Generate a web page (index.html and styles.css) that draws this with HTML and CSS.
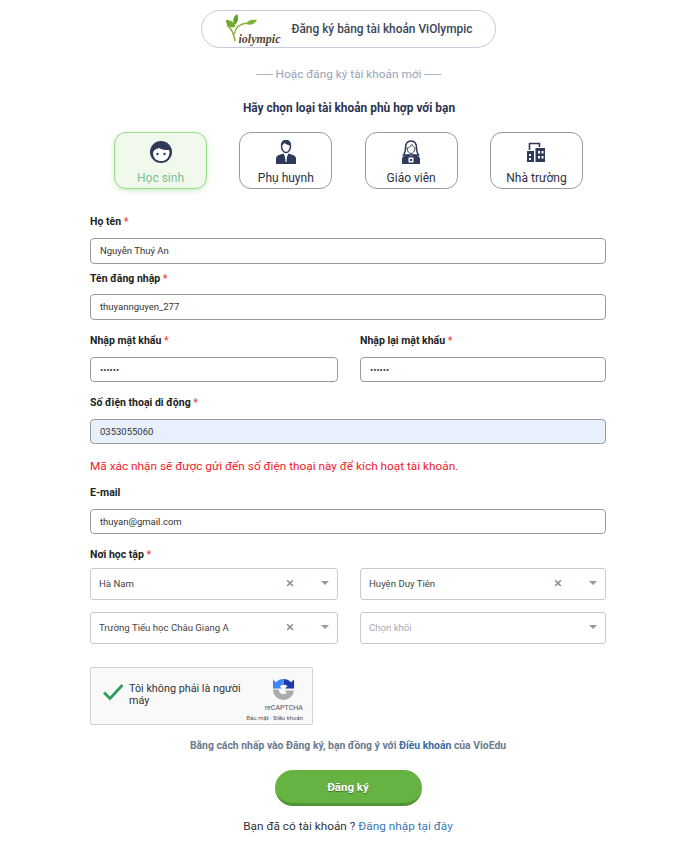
FILE: index.html
```html
<!DOCTYPE html>
<html lang="vi">
<head>
<meta charset="utf-8">
<title>Đăng ký</title>
<link rel="stylesheet" href="styles.css">
</head>
<body>
<main class="page">
  <a class="social">
    <span class="logo">
      <svg class="sprout" width="34" height="30" viewBox="0 0 34 30">
        <path d="M2 11C6 14 9 20 10 27" fill="none" stroke="#8fb33a" stroke-width="1.600"/>
        <path d="M9.500 20C10 14 14 10 22 9" fill="none" stroke="#8fb33a" stroke-width="1.400"/>
        <path d="M10 13C5 14 1 12 1 6C6 6 10 8 10 13Z" fill="#6fa82e"/>
        <path d="M10 11C7 7 8 3 12 0C14 4 13 8 10 11Z" fill="#63a02a"/>
        <path d="M21 10C23 6 27 5 32 6C30 10 26 12 21 10Z" fill="#7db33a"/>
      </svg>
      <span class="logo-text">iolympic</span>
    </span>
    <span class="social-text">Đăng ký bằng tài khoản ViOlympic</span>
  </a>
  <p class="divider">── Hoặc đăng ký tài khoản mới ──</p>
  <h2 class="choose">Hãy chọn loại tài khoản phù hợp với bạn</h2>
  <div class="roles">
    <button class="role role-active">
      <svg width="24" height="24" viewBox="0 0 24 24"><circle cx="12" cy="12" r="11" fill="#2e3a59"/><path d="M4 14C4 10 7 9 10 8C13 10 17 10 20 10C20.500 11 21 13 20 15C19 19 16 21 12 21C8 21 5 19 4 14Z" fill="#fff"/><circle cx="8.500" cy="14" r="1.200" fill="#2e3a59"/><circle cx="15.500" cy="14" r="1.200" fill="#2e3a59"/></svg>
      <span>Học sinh</span>
    </button>
    <button class="role">
      <svg width="24" height="24" viewBox="0 0 24 24"><path d="M7.500 6C7.500 2.500 9.500 0.500 12 0.500C14.500 0.500 16.500 2.500 16.500 6C16.500 9.500 14.500 12.500 12 12.500C9.500 12.500 7.500 9.500 7.500 6Z" fill="#fff" stroke="#2e3a59" stroke-width="1.400"/><path d="M7.500 6C9 5 10 3.500 10.500 3C12 4.500 15 5 16.500 6C16.500 3 15 0.500 12 0.500C9 0.500 7.500 3 7.500 6Z" fill="#2e3a59"/><path d="M2 24V18.500C2 16.500 3.500 15.500 5 15L9.500 13.500L12 19L14.500 13.500L19 15C20.500 15.500 22 16.500 22 18.500V24Z" fill="#2e3a59"/><path d="M11.200 16.500H12.800L12.500 22H11.500Z" fill="#fff"/></svg>
      <span>Phụ huynh</span>
    </button>
    <button class="role">
      <svg width="24" height="24" viewBox="0 0 24 24"><path d="M12 1C7.500 1 6.500 4.500 6.500 8C6.500 11 6 13 4.500 15H19.500C18 13 17.500 11 17.500 8C17.500 4.500 16.500 1 12 1Z" fill="#fff" stroke="#2e3a59" stroke-width="1.500"/><path d="M8 8C10 7.500 12 6 13 4.500C14 6.500 15 7.500 16 8C16 11 14 13.500 12 13.500C10 13.500 8 11 8 8Z" fill="#fff" stroke="#2e3a59" stroke-width="1"/><path d="M3 24V19C3 17 4.500 16 6 15.500L9.500 14.500L12 16.500L14.500 14.500L18 15.500C19.500 16 21 17 21 19V24Z" fill="#2e3a59"/><rect x="9.500" y="17.500" width="5" height="5" fill="#fff"/><rect x="11" y="19" width="2" height="2" fill="#2e3a59"/></svg>
      <span>Giáo viên</span>
    </button>
    <button class="role">
      <svg width="24" height="24" viewBox="0 0 24 24"><path d="M5.500 10V3.500H15.500V7" fill="none" stroke="#2e3a59" stroke-width="1.600"/><path d="M3 11H10V22H3ZM11.500 8H21V22H11.500Z" fill="#2e3a59"/><rect x="5" y="14" width="2" height="2" fill="#fff"/><rect x="5" y="18" width="2" height="2" fill="#fff"/><rect x="14" y="11" width="2" height="2.500" fill="#fff"/><rect x="17.500" y="11" width="2" height="2.500" fill="#fff"/><rect x="14" y="16" width="2" height="2.500" fill="#fff"/><rect x="17.500" y="16" width="2" height="2.500" fill="#fff"/></svg>
      <span>Nhà trường</span>
    </button>
  </div>
  <form class="form">
    <label class="label label-name">Họ tên <em>*</em></label>
    <input class="input input-name" value="Nguyễn Thuý An">
    <label class="label label-user">Tên đăng nhập <em>*</em></label>
    <input class="input input-user" value="thuyannguyen_277">
    <div class="two two-pass">
      <div><label class="label">Nhập mật khẩu <em>*</em></label><input class="input" type="password" value="123456"></div>
      <div><label class="label">Nhập lại mật khẩu <em>*</em></label><input class="input" type="password" value="123456"></div>
    </div>
    <label class="label label-phone">Số điện thoại di động <em>*</em></label>
    <input class="input input-filled" value="0353055060">
    <p class="notice">Mã xác nhận sẽ được gửi đến số điện thoại này để kích hoạt tài khoản.</p>
    <label class="label label-mail">E-mail</label>
    <input class="input" value="thuyan@gmail.com">
    <label class="label label-place">Nơi học tập <em>*</em></label>
    <div class="selects">
      <div class="select"><span class="select-value">Hà Nam</span><span class="clear">×</span><i class="caret"></i></div>
      <div class="select"><span class="select-value">Huyện Duy Tiên</span><span class="clear">×</span><i class="caret"></i></div>
      <div class="select"><span class="select-value">Trường Tiểu học Châu Giang A</span><span class="clear">×</span><i class="caret"></i></div>
      <div class="select"><span class="select-value placeholder">Chọn khối</span><i class="caret"></i></div>
    </div>
    <div class="captcha">
      <svg class="check" width="22" height="18" viewBox="0 0 22 18"><path d="M2 9.500L8 15.500L20.500 2" fill="none" stroke="#2e9e5b" stroke-width="2.800"/></svg>
      <span class="captcha-text">Tôi không phải là người máy</span>
      <div class="captcha-brand">
        <svg class="brand-icon" width="23" height="23" viewBox="0 0 24 24">
          <path d="M12 1A11 11 0 0 1 20 4.500L23 1.500V11H13.500L16.200 8.500A5 5 0 0 0 12 7Z" fill="#1c3aa9"/>
          <path d="M12 1V7A5 5 0 0 0 8 9L10.500 11H1V1.500L4 4.500A11 11 0 0 1 12 1Z" fill="#4285f4"/>
          <path d="M23 12A11 11 0 0 1 1 12H7A5 5 0 0 0 12 17C13.500 17 14.500 16.500 15.500 15.500L13.500 13H22.900Z" fill="#ababab"/>
        </svg>
        <span class="brand-name">reCAPTCHA</span>
        <span class="brand-links">Bảo mật · Điều khoản</span>
      </div>
    </div>
    <p class="terms">Bằng cách nhấp vào Đăng ký, bạn đồng ý với <a>Điều khoản</a> của VioEdu</p>
    <button class="submit" type="button">Đăng ký</button>
    <p class="login">Bạn đã có tài khoản ? <a>Đăng nhập tại đây</a></p>
  </form>
</main>
</body>
</html>
```
FILE: styles.css
```css
* { box-sizing: border-box; }
html, body { margin: 0; background: #fff; }
body { font-family: Roboto, "Noto Sans", sans-serif; color: #222; overflow: hidden; }
.page { width: 700px; height: 842px; padding-top: 10px; display: flex; flex-direction: column; align-items: center; }

.social { width: 295px; height: 38px; margin-left: -4px; border: 1px solid #c5cbdd; border-radius: 19px; display: flex; align-items: center; padding-left: 23px; }
.logo { position: relative; width: 58px; height: 30px; display: block; }
.sprout { position: absolute; left: 0; top: 0; }
.logo-text { position: absolute; left: 14px; top: 18px; font: italic bold 12px "Liberation Serif", serif; color: #5b4630; }
.social-text { margin-left: 9px; font-size: 11.900px; font-weight: 500; color: #3c4658; }

.divider { margin: 19px 0 0 -3px; height: 15px; line-height: 15px; font-size: 11.800px; color: #98a3b8; }
.choose { margin: 19px 0 0 -2px; height: 15px; line-height: 15px; font-size: 11.900px; font-weight: 700; color: #2c3550; }

.roles { margin: 16px 0 0 -3px; width: 469px; display: flex; justify-content: space-between; }
.role { width: 93px; height: 57px; padding: 7px 0 0; background: #fff; border: 1px solid #9a9a9a; border-radius: 12px; display: flex; flex-direction: column; align-items: center; font: 400 12px/16px Roboto, sans-serif; color: #2a2f45; }
.role span { margin-top: 6px; }
.role-active { background: #f1f9ec; border-color: #95dc86; color: #7cc093; box-shadow: 0 2px 5px rgba(120, 200, 110, .35); }

.form { width: 516px; margin: 0 0 0 -4px; display: flex; flex-direction: column; }
.label { display: block; height: 14px; line-height: 16px; font-size: 10.500px; font-weight: 700; color: #222; }
.label em { font-style: normal; color: #e5504f; }
.label-name { margin-top: 25px; }
.label-user { margin-top: 7px; }
.label-phone { margin-top: 13px; }
.label-mail { margin-top: 11px; }
.label-place { margin-top: 13px; }
.input { display: block; width: 100%; height: 25px; margin-top: 10px; padding: 0 9px; border: 1px solid #9a9a9a; border-radius: 4px; background: #fff; font: 400 9.500px Roboto, sans-serif; color: #333; }
.input-name { height: 26px; padding-bottom: 2px; }
.input-user { height: 26px; margin-top: 9px; padding-bottom: 1px; }
.input-filled { background: #e8f0fe; }
.two-pass { margin-top: 13px; display: grid; grid-template-columns: 248px 246px; column-gap: 22px; }
.notice { margin: 15px 0 0; height: 15px; line-height: 15px; font-size: 11.800px; color: #ee1c2e; }
.selects { margin-top: 7px; display: grid; grid-template-columns: 248px 246px; column-gap: 22px; row-gap: 12px; }
.select { height: 32px; display: flex; align-items: center; padding: 0 9px 2px 8px; border: 1px solid #c9c9c9; border-radius: 3px; background: #fff; }
.select-value { flex: 1; font-size: 9.600px; color: #444; }
.placeholder { color: #aaa; }
.clear { width: 10px; margin-right: 26px; color: #888; font-size: 15px; line-height: 14px; text-align: center; }
.caret { width: 0; height: 0; border: 4px solid transparent; border-top-color: #999; border-bottom-width: 0; margin-right: -1px; }

.captcha { margin-top: 23px; width: 223px; height: 58px; padding: 0 9px 0 11px; display: flex; align-items: center; background: #f9f9f9; border: 1px solid #d3d3d3; border-radius: 2px; }
.check { flex: none; margin-bottom: 8px; }
.captcha-text { flex: none; margin: 0 0 2px 5px; width: 113px; font-size: 10.800px; line-height: 12px; color: #333; }
.captcha-brand { margin-left: auto; width: 60px; flex: none; display: flex; flex-direction: column; align-items: flex-end; padding-top: 7px; }
.brand-icon { margin-right: 8px; }
.brand-name { margin-top: 2px; font-size: 7.100px; line-height: 10px; color: #555; }
.brand-links { font-size: 6px; line-height: 9px; color: #555; white-space: nowrap; }

.terms { margin: 13px 0 0; text-align: center; height: 14px; line-height: 16px; font-size: 10.400px; font-weight: 700; color: #6b7a90; }
.terms a { color: #3a6ea5; }
.submit { align-self: center; width: 147px; height: 36px; margin-top: 18px; border: 0; border-bottom: 3px solid #4f9632; border-radius: 18px; background: #66b343; color: #fff; font: 700 11.500px Roboto, sans-serif; text-shadow: 0 1px 1px rgba(0, 0, 0, .4); }
.login { margin: 12px 0 0; text-align: center; height: 16px; line-height: 16px; font-size: 11.800px; color: #333; }
.login a { color: #3d7ab5; }
```
